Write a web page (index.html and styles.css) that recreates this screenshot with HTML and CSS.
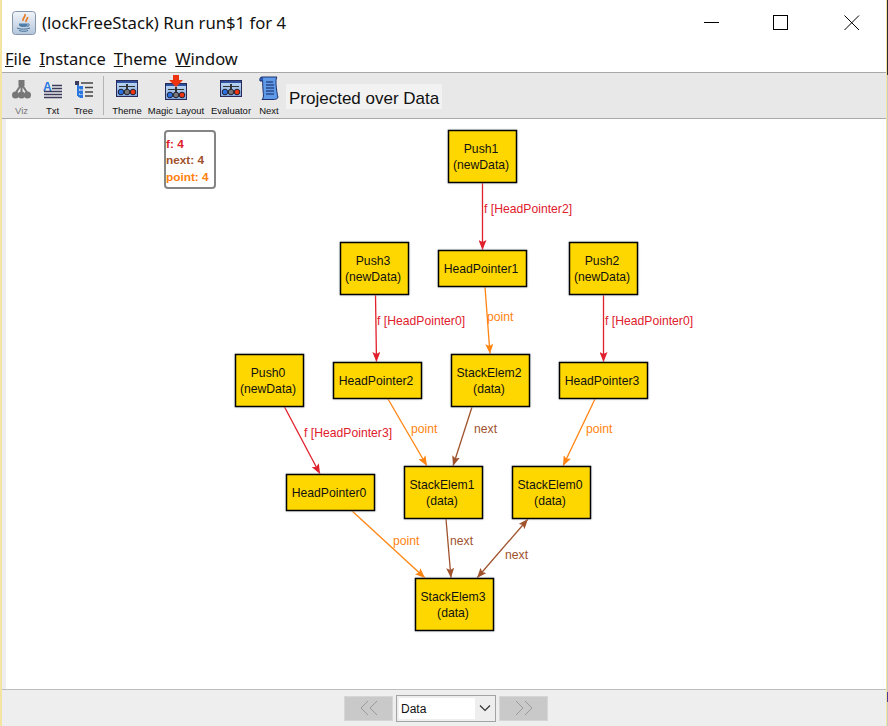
FILE: index.html
```html
<!DOCTYPE html>
<html lang="en">
<head>
    <meta charset="UTF-8">
    <title>(lockFreeStack) Run run$1 for 4</title>
    <link rel="stylesheet" href="styles.css">
</head>
<body>
    <svg class="defs" width="0" height="0">
        <defs>
            <linearGradient id="panel" x1="0" y1="0" x2="0" y2="1">
                <stop offset="0" stop-color="#c4dcf6"/>
                <stop offset="1" stop-color="#7fa6dc"/>
            </linearGradient>
            <linearGradient id="javaBg" x1="0" y1="0" x2="0" y2="1">
                <stop offset="0" stop-color="#f2f5fa"/>
                <stop offset="1" stop-color="#b4c6dc"/>
            </linearGradient>
            <symbol id="mixer" viewBox="0 0 22 17">
                <rect x="0.5" y="0.5" width="21" height="16" fill="url(#panel)" stroke="#2a2a5a"/>
                <rect x="1" y="1" width="20" height="2" fill="#2f4f9f"/>
                <path d="M3 6.5H19" stroke="#333" stroke-width="1"/>
                <rect x="10" y="4" width="2" height="5" fill="#333"/>
                <circle cx="5" cy="12" r="2.8" fill="#2a6fe0" stroke="#223"/>
                <circle cx="11" cy="12" r="2.8" fill="#777" stroke="#223"/>
                <circle cx="17" cy="12" r="2.8" fill="#ee3311" stroke="#223"/>
            </symbol>
            <marker id="arrowRed" class="mark-red" viewBox="0 0 10 8" refX="10" refY="4" markerWidth="10" markerHeight="8" markerUnits="userSpaceOnUse" orient="auto-start-reverse"><path d="M0 0L10 4L0 8L2 4Z"/></marker>
            <marker id="arrowOrange" class="mark-orange" viewBox="0 0 10 8" refX="10" refY="4" markerWidth="10" markerHeight="8" markerUnits="userSpaceOnUse" orient="auto-start-reverse"><path d="M0 0L10 4L0 8L2 4Z"/></marker>
            <marker id="arrowBrown" class="mark-brown" viewBox="0 0 10 8" refX="10" refY="4" markerWidth="10" markerHeight="8" markerUnits="userSpaceOnUse" orient="auto-start-reverse"><path d="M0 0L10 4L0 8L2 4Z"/></marker>
        </defs>
    </svg>

    <div class="window">
        <div class="titlebar">
            <svg class="app-icon" width="24" height="24" viewBox="0 0 24 24">
                <rect x="0.5" y="0.5" width="23" height="23" rx="3" fill="url(#javaBg)" stroke="#8496ac"/>
                <path d="M13 3C14 6 10 7 11 10M15.500 6C16 8 13.500 8.500 14 11" fill="none" stroke="#e8761c" stroke-width="1.600"/>
                <path d="M7 12.500H15.500V14C15.500 15.500 14 16 11.500 16C9 16 7 15.500 7 14Z" fill="#4f7fa8"/>
                <path d="M15.500 13C18 12.500 18 15 15 15.500M5 17C8 18.500 15 18.500 18 17M7 19.500C10 20.500 14 20.500 16 19.500" fill="none" stroke="#3f6f98" stroke-width="1"/>
            </svg>
            <span class="title">(lockFreeStack) Run run$1 for 4</span>
            <div class="win-controls">
                <svg width="16" height="16" viewBox="0 0 16 16"><path d="M0 7.500H15" stroke="#000"/></svg>
                <svg class="win-max" width="16" height="16" viewBox="0 0 16 16"><rect x="0.500" y="0.500" width="14" height="14" fill="none" stroke="#000"/></svg>
                <svg width="16" height="16" viewBox="0 0 16 16"><path d="M0.500 0.500L15 15M15 0.500L0.500 15" stroke="#000" stroke-width="1"/></svg>
            </div>
        </div>

        <div class="menubar">
            <span class="menu"><u>F</u>ile</span>
            <span class="menu"><u>I</u>nstance</span>
            <span class="menu"><u>T</u>heme</span>
            <span class="menu"><u>W</u>indow</span>
        </div>

        <div class="toolbar">
            <div class="tool tool-sm disabled">
                <svg width="20" height="20" viewBox="0 0 20 20">
                    <path d="M9.500 4L3 14M9.500 4V14M9.500 4L16 14" stroke="#777" stroke-width="2"/>
                    <rect x="6.500" y="0" width="6" height="6" fill="#777"/>
                    <circle cx="3.500" cy="15" r="3.500" fill="#777"/>
                    <circle cx="9.500" cy="15" r="3.500" fill="#777"/>
                    <circle cx="15.500" cy="15" r="3.500" fill="#777"/>
                </svg>
                <span>Viz</span>
            </div>
            <div class="tool tool-sm">
                <svg width="20" height="20" viewBox="0 0 20 20">
                    <text class="icon-a" x="0" y="11">A</text>
                    <path d="M9 5.500H19M9 8.500H19M1 11.500H19M1 14.500H19M1 17.500H19" stroke="#3c3c5c" stroke-width="1.500"/>
                </svg>
                <span>Txt</span>
            </div>
            <div class="tool tool-sm">
                <svg width="20" height="20" viewBox="0 0 20 20">
                    <path d="M4 3V16M4 7.500H8M4 12H8M4 16H8" stroke="#2a78e0" stroke-width="2"/>
                    <rect x="1" y="1" width="4" height="4" fill="#3c3c5c"/>
                    <rect x="5.500" y="6" width="3.500" height="3.500" fill="#2a78e0"/>
                    <rect x="5.500" y="10.500" width="3.500" height="3.500" fill="#2a78e0"/>
                    <rect x="5.500" y="14.500" width="3.500" height="3.500" fill="#2a78e0"/>
                    <path d="M7 3H19M11 7.500H19M11 12H19M11 16H19" stroke="#444" stroke-width="1.500"/>
                </svg>
                <span>Tree</span>
            </div>
            <div class="tool-sep"></div>
            <div class="tool tool-theme">
                <svg class="icon-low" width="22" height="17"><use href="#mixer"/></svg>
                <span>Theme</span>
            </div>
            <div class="tool tool-magic">
                <svg width="22" height="25" viewBox="0 0 22 25">
                    <use href="#mixer" y="8" width="22" height="17"/>
                    <path d="M8 0H14V5H18L11 12L4 5H8Z" fill="#ee3311"/>
                </svg>
                <span>Magic Layout</span>
            </div>
            <div class="tool tool-eval">
                <svg class="icon-low" width="22" height="17"><use href="#mixer"/></svg>
                <span>Evaluator</span>
            </div>
            <div class="tool tool-next">
                <svg width="20" height="24" viewBox="0 0 20 24">
                    <path d="M3 1H18C16.500 3 17 8 17.500 13C18 17 18.500 20 19 21C19 23 16 23.500 14 23.500H3C5 22 4.500 19 4 14C3.500 9 4 4 3 1Z" fill="#5f9ae8" stroke="#1f2f6f"/>
                    <path d="M3 1C1 1 0.500 3 1 5H4" fill="#2a5fc0" stroke="#1f2f6f"/>
                    <path d="M7 6H14M7 9H15M7 12H15M7 15H15M7 18H15" stroke="#10205f" stroke-width="1"/>
                </svg>
                <span>Next</span>
            </div>
            <div class="projection">Projected over Data</div>
        </div>

        <div class="canvas">
            <svg class="graph" width="880" height="570" viewBox="6 119 880 570">
                <g class="legend">
                    <rect class="legend-box" x="165" y="131" width="50" height="57" rx="3"/>
                    <text class="lbl-red" x="166" y="148">f: 4</text>
                    <text class="lbl-brown" x="166" y="164">next: 4</text>
                    <text class="lbl-orange" x="166" y="181">point: 4</text>
                </g>

                <g class="edges">
                    <line class="e-red" x1="482.500" y1="183" x2="482.500" y2="250"/>
                    <line class="e-orange" x1="485" y1="287" x2="490" y2="354"/>
                    <line class="e-red" x1="375.500" y1="295" x2="376.500" y2="362"/>
                    <line class="e-red" x1="603.500" y1="295" x2="603.500" y2="362"/>
                    <line class="e-orange" x1="388" y1="399" x2="427" y2="466"/>
                    <line class="e-brown" x1="472" y1="407" x2="453" y2="466"/>
                    <line class="e-orange" x1="595" y1="399" x2="563" y2="466"/>
                    <line class="e-red" x1="284" y1="406" x2="320" y2="474"/>
                    <line class="e-orange" x1="351" y1="510" x2="425" y2="578"/>
                    <line class="e-brown" x1="446" y1="519" x2="451" y2="578"/>
                    <line class="e-brown e-both" x1="528" y1="519" x2="477" y2="578"/>
                </g>

                <g class="edge-labels">
                    <text class="txt-red" x="484" y="213">f [HeadPointer2]</text>
                    <text class="txt-orange" x="487" y="321">point</text>
                    <text class="txt-red" x="377" y="325">f [HeadPointer0]</text>
                    <text class="txt-red" x="605" y="325">f [HeadPointer0]</text>
                    <text class="txt-orange" x="411" y="433">point</text>
                    <text class="txt-brown" x="474" y="433">next</text>
                    <text class="txt-orange" x="586" y="433">point</text>
                    <text class="txt-red" x="304" y="437">f [HeadPointer3]</text>
                    <text class="txt-orange" x="393" y="545">point</text>
                    <text class="txt-brown" x="450" y="545">next</text>
                    <text class="txt-brown" x="505" y="559">next</text>
                </g>

                <g class="nodes">
                    <rect x="448.500" y="130.500" width="68" height="52"/>
                    <text x="482.500" y="153">Push1</text><text x="482.500" y="169">(newData)</text>

                    <rect x="438.500" y="250.500" width="88" height="36"/>
                    <text x="482.500" y="273">HeadPointer1</text>

                    <rect x="340.500" y="242.500" width="68" height="52"/>
                    <text x="374.500" y="265">Push3</text><text x="374.500" y="281">(newData)</text>

                    <rect x="569.500" y="242.500" width="68" height="52"/>
                    <text x="603.500" y="265">Push2</text><text x="603.500" y="281">(newData)</text>

                    <rect x="333.500" y="362.500" width="88" height="36"/>
                    <text x="377.500" y="385">HeadPointer2</text>

                    <rect x="451.500" y="354.500" width="78" height="52"/>
                    <text x="490.500" y="377">StackElem2</text><text x="490.500" y="393">(data)</text>

                    <rect x="559.500" y="362.500" width="88" height="36"/>
                    <text x="603.500" y="385">HeadPointer3</text>

                    <rect x="235.500" y="354.500" width="68" height="52"/>
                    <text x="269.500" y="377">Push0</text><text x="269.500" y="393">(newData)</text>

                    <rect x="286.500" y="474.500" width="88" height="36"/>
                    <text x="330.500" y="497">HeadPointer0</text>

                    <rect x="404.500" y="466.500" width="78" height="52"/>
                    <text x="443.500" y="489">StackElem1</text><text x="443.500" y="505">(data)</text>

                    <rect x="512.500" y="466.500" width="78" height="52"/>
                    <text x="551.500" y="489">StackElem0</text><text x="551.500" y="505">(data)</text>

                    <rect x="415.500" y="578.500" width="78" height="52"/>
                    <text x="454.500" y="601">StackElem3</text><text x="454.500" y="617">(data)</text>
                </g>
            </svg>
        </div>

        <div class="bottombar">
            <div class="nav-btn">
                <svg width="20" height="16" viewBox="0 0 20 16"><path d="M9 1L2 8L9 15M18 1L11 8L18 15" fill="none" stroke="#9a9a9a"/></svg>
            </div>
            <div class="combo">
                <span class="combo-text">Data</span>
                <svg width="12" height="8" viewBox="0 0 12 8"><path d="M1 1.500L6 6.500L11 1.500" fill="none" stroke="#333" stroke-width="1.200"/></svg>
            </div>
            <div class="nav-btn">
                <svg width="20" height="16" viewBox="0 0 20 16"><path d="M2 1L9 8L2 15M11 1L18 8L11 15" fill="none" stroke="#9a9a9a"/></svg>
            </div>
        </div>
    </div>
</body>
</html>
```

FILE: styles.css
```css
html, body {
    margin: 0;
    padding: 0;
}

/* the sliver of desktop showing past the right window edge */
body {
    width: 888px;
    height: 726px;
    overflow: hidden;
    font-family: 'Liberation Sans', Arial, sans-serif;
    background: linear-gradient(#2a2a2a 0 75px, #c8c8c8 75px 692px, #4a3fa0 692px 702px, #c8c8c8 702px);
}

.defs {
    display: block;
    height: 0;
}

.window {
    display: flex;
    flex-direction: column;
    box-sizing: border-box;
    width: 887px;
    height: 726px;
    background: #eeeeee;
    border-left: 2px solid #f3e4a2;
    border-right: 1px solid #f3e4a2;
}

/* title bar */
.titlebar {
    display: flex;
    align-items: center;
    height: 45px;
    flex: none;
    padding-left: 10px;
    color: #111;
    background: #fff;
}

.app-icon {
    flex: none;
    margin-right: 6px;
}

.title {
    font-family: 'Noto Sans', sans-serif;
    font-size: 16.700px;
}

.win-controls {
    display: flex;
    gap: 54px;
    margin-left: auto;
    margin-right: 26px;
}

.win-max {
    margin: 0 1px 0 -1px;
}

/* menu */
.menubar {
    display: flex;
    align-items: center;
    gap: 8px;
    height: 28px;
    flex: none;
    box-sizing: border-box;
    padding-left: 3px;
    font-family: 'Noto Sans', sans-serif;
    font-size: 16.500px;
    color: #111;
    background: #fff;
    border-bottom: 1px solid #a9a9a9;
}

/* toolbar */
.toolbar {
    display: flex;
    align-items: stretch;
    height: 45px;
    flex: none;
    padding-left: 4px;
    background: #e8e8e8;
    border-bottom: 1px solid #a9a9a9;
}

.tool {
    display: flex;
    flex-direction: column;
    align-items: center;
    justify-content: flex-end;
    flex: none;
    padding-bottom: 2px;
    box-sizing: border-box;
    font-size: 9.500px;
    color: #111;
}

.tool svg {
    margin-bottom: 5px;
}

.tool svg.icon-low {
    margin-bottom: 8px;
}

.tool-sm {
    width: 31px;
}

.tool-theme {
    width: 34px;
    margin-left: 6px;
}

.tool-magic {
    width: 60px;
    margin-left: 2px;
}

.tool-eval {
    width: 46px;
    margin-left: 2px;
}

.tool-next {
    width: 26px;
    margin-left: 2px;
}

.tool.disabled {
    color: #777;
}

.tool-sep {
    width: 1px;
    margin: 3px 0 3px 4px;
    background: #b4b4b4;
}

.icon-a {
    font-size: 12px;
    font-weight: bold;
    fill: #2a78e0;
}

.projection {
    align-self: center;
    margin: 1px 0 0 4px;
    padding: 4px 3px 0;
    font-size: 17px;
    line-height: 21px;
    color: #111;
    background: #f2f2f2;
}

/* graph area */
.canvas {
    flex: 1;
    min-height: 0;
    margin-left: 4px;
    background: #fff;
}

.graph {
    display: block;
    font-size: 12.200px;
}

.legend-box {
    fill: #fff;
    stroke: #858585;
    stroke-width: 2;
}

.legend text {
    font-size: 11.800px;
    font-weight: bold;
}

.lbl-red { fill: #dc1c28; }
.lbl-brown { fill: #a0522d; }
.lbl-orange { fill: #ff7f0e; }

.txt-red { fill: #e0202c; }
.txt-brown { fill: #a0522d; }
.txt-orange { fill: #ff8410; }

.edges line {
    stroke-width: 1.300;
}

.e-red {
    stroke: #e0202c;
    marker-end: url(#arrowRed);
}

.e-orange {
    stroke: #ff8410;
    marker-end: url(#arrowOrange);
}

.e-brown {
    stroke: #a0522d;
    marker-end: url(#arrowBrown);
}

.e-both {
    marker-start: url(#arrowBrown);
}

.mark-red path { fill: #e0202c; }
.mark-orange path { fill: #ff8410; }
.mark-brown path { fill: #a0522d; }

.nodes rect {
    fill: #ffd700;
    stroke: #000;
    stroke-width: 1.500;
    filter: drop-shadow(0 0 1px #c4cad8);
}

.nodes text {
    text-anchor: middle;
    fill: #111;
    transform: translateX(-1.500px);
}

/* bottom bar */
.bottombar {
    display: flex;
    justify-content: center;
    align-items: center;
    gap: 3px;
    height: 37px;
    flex: none;
    padding-left: 4px;
    background: #eeeeee;
    border-top: 1px solid #bdbdbd;
    box-sizing: border-box;
}

.nav-btn {
    display: flex;
    justify-content: center;
    align-items: center;
    width: 49px;
    height: 25px;
    background: #c9c9c9;
    border: 1px solid #d6d6d6;
    box-sizing: border-box;
}

.combo {
    display: flex;
    align-items: center;
    width: 100px;
    height: 27px;
    box-sizing: border-box;
    background: #eeeeee;
    border: 1px solid #a3a3a3;
}

.combo-text {
    display: block;
    width: 74px;
    height: 21px;
    margin-left: 2px;
    padding-left: 2px;
    font-size: 12px;
    line-height: 22px;
    color: #111;
    background: #fff;
}

.combo svg {
    margin-left: 4px;
}
```
